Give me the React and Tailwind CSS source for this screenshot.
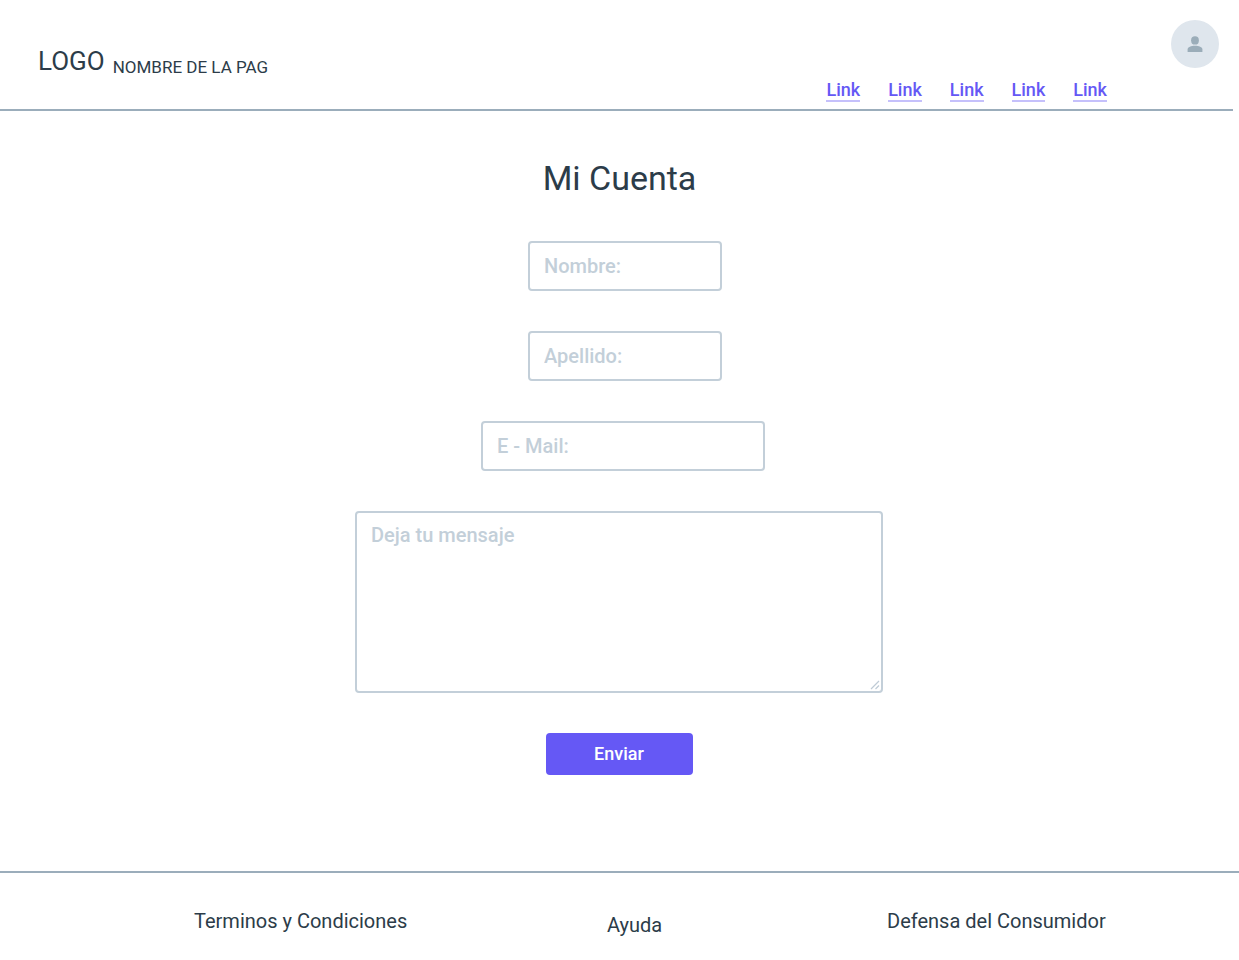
const links = ['Link', 'Link', 'Link', 'Link', 'Link'];

const fieldClass =
  'block max-w-full rounded border-2 border-[#c3cfd9] bg-white px-3.5 text-xl font-medium text-[#2c3c49] placeholder:text-[#c3cfd9] outline-none focus:border-[#6558f5]';

function Header() {
  return (
    <header className="mr-1.5 flex min-h-[111px] justify-between border-b-2 border-[#9badbb]">
      <div className="flex items-start pt-[41px] pl-[38px]">
        <div className="flex items-end gap-2">
          <span className="text-[26px] leading-10">LOGO</span>
          <span className="text-[17px] leading-7">NOMBRE DE LA PAG</span>
        </div>
      </div>
      <div className="flex gap-16 pr-3.5">
        <nav aria-label="Principal" className="flex items-end gap-7 pb-[7px]">
          {links.map((label, i) => (
            <a
              key={i}
              href="#"
              className="border-b-2 border-[#c5c0fb] text-lg leading-5 font-medium text-[#6558f5]"
            >
              {label}
            </a>
          ))}
        </nav>
        <a
          href="#"
          aria-label="Perfil"
          className="mt-5 flex size-12 items-center justify-center rounded-full bg-[#dfe6ed]"
        >
          <svg viewBox="0 0 16 16" className="size-4" fill="#9badb9" aria-hidden="true">
            <ellipse cx="8" cy="4.4" rx="3.9" ry="4.2" />
            <path d="M0.6 15.9V13.4C0.6 11 4.2 9.8 8 9.8s7.4 1.2 7.4 3.6v2.5z" />
          </svg>
        </a>
      </div>
    </header>
  );
}

function AccountForm() {
  return (
    <form
      className="flex flex-col items-center gap-10 pr-[17px] pl-4"
      onSubmit={(event) => event.preventDefault()}
    >
      <div className="flex max-w-full flex-col gap-10 pl-3">
        <input
          type="text"
          aria-label="Nombre"
          placeholder="Nombre:"
          className={`${fieldClass} h-[50px] w-[194px]`}
        />
        <input
          type="text"
          aria-label="Apellido"
          placeholder="Apellido:"
          className={`${fieldClass} h-[50px] w-[194px]`}
        />
      </div>
      <div className="max-w-full pl-2">
        <input
          type="email"
          aria-label="E-Mail"
          placeholder="E - Mail:"
          className={`${fieldClass} h-[50px] w-[284px]`}
        />
      </div>
      <div className="relative max-w-full">
        <textarea
          aria-label="Mensaje"
          placeholder="Deja tu mensaje"
          className={`${fieldClass} h-[182px] w-[528px] resize-none py-2 leading-7`}
        />
        <svg
          viewBox="0 0 10 10"
          className="pointer-events-none absolute right-[3px] bottom-[3px] size-2.5"
          fill="none"
          stroke="#bfcbd6"
          strokeWidth="1.2"
          aria-hidden="true"
        >
          <path d="M1 9L9 1M5.5 9L9 5.5" />
        </svg>
      </div>
      <button
        type="submit"
        className="h-[42px] w-[147px] rounded bg-[#6558f5] text-lg font-medium text-white"
      >
        Enviar
      </button>
    </form>
  );
}

function Footer() {
  return (
    <footer className="mt-24 grid grid-cols-[413fr_280fr_352fr] items-start border-t-2 border-[#9badbb] pt-8 pb-6 pl-[194px] text-xl leading-8">
      <a href="#">Terminos y Condiciones</a>
      <a href="#" className="pt-1">
        Ayuda
      </a>
      <a href="#">Defensa del Consumidor</a>
    </footer>
  );
}

export default function App() {
  return (
    <div className="bg-white font-['Roboto',sans-serif] text-[#2c3c49]">
      <Header />
      <main>
        <h1 className="pt-[38px] pb-[34px] text-center text-[34px] leading-[58px]">Mi Cuenta</h1>
        <AccountForm />
      </main>
      <Footer />
    </div>
  );
}
